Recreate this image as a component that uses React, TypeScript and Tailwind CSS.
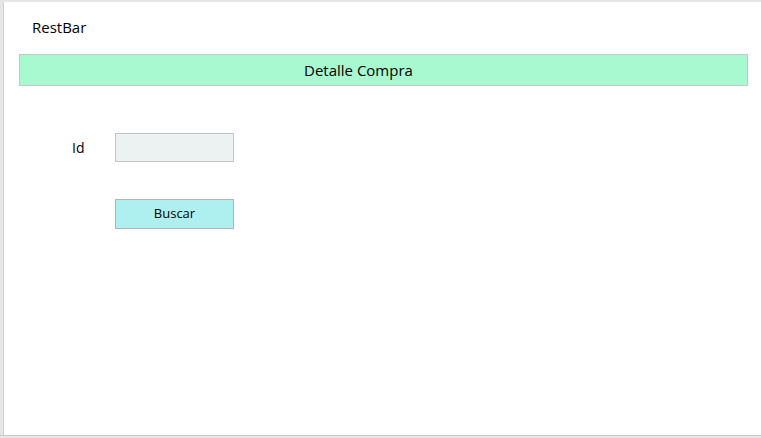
import React from "react";

export default function App() {
  return (
    <div
      className="w-[761px] h-[438px] bg-[#e6e6e6] flex flex-col"
      style={{ fontFamily: '"Open Sans", "Noto Sans", sans-serif' }}
    >
      <div className="flex-1 ml-[3px] mt-[2px] bg-white border-l border-[#d0d0d0] flex flex-col">
        <div className="h-[52px] pl-[28px] pt-[15px] text-[15px] leading-[20px] text-black">RestBar</div>
        <div className="ml-[15px] w-[729px] h-[32px] bg-[#a8f8d0] border border-[#c6c6c6] flex items-center pl-[284px] text-[15px] text-black">
          Detalle Compra
        </div>
        <div className="flex mt-[46px] pl-[68px] items-center h-[30px]">
          <span className="w-[43px] text-[14px] text-black">Id</span>
          <div className="w-[119px] h-[29px] bg-[#ecf2f2] border border-[#c4c4c4]" />
        </div>
        <div className="mt-[37px] ml-[111px] w-[119px] h-[30px] bg-[#aeeff0] border border-[#b4b4b4] flex items-center justify-center text-[13px] text-black">
          Buscar
        </div>
        <div className="flex-1" />
      </div>
      <div className="h-[3px] border-t border-[#c8c8c8] bg-[#e6e6e6]" />
    </div>
  );
}
